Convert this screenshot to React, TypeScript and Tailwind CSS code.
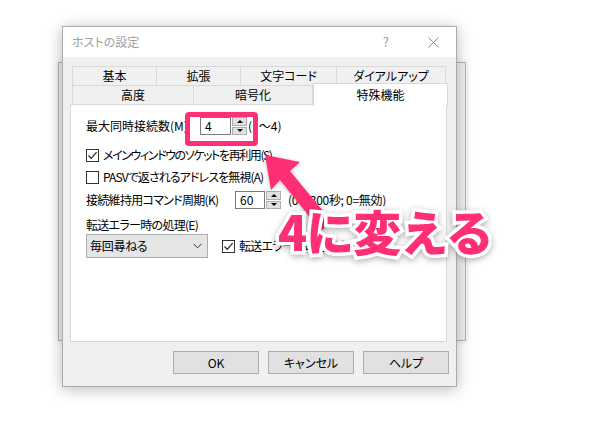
import React from "react";

const PINK = "#ff2f76";

function Spin(props: { value: string; width: number }) {
  const { value, width } = props;
  return <div className="flex items-stretch h-[18px]">
    <div className="h-full border border-[#7a7a7a] bg-white pl-[4px] text-[12px] leading-[16px] text-black" style={{ width }}>
      {value}
    </div>
    <div className="ml-[1px] w-[15px] flex flex-col gap-px">
      <div className="flex-1 bg-[#e1e1e1] border border-[#adadad] flex items-center justify-center">
        <div className="w-0 h-0 border-l-[3px] border-r-[3px] border-b-[3px] border-l-transparent border-r-transparent border-b-black" />
      </div>
      <div className="flex-1 bg-[#e1e1e1] border border-[#adadad] flex items-center justify-center">
        <div className="w-0 h-0 border-l-[3px] border-r-[3px] border-t-[3px] border-l-transparent border-r-transparent border-t-black" />
      </div>
    </div>
  </div>;
}

function Check(props: { checked?: boolean; label: string; tight?: string }) {
  const { checked = false, label, tight = "" } = props;
  return <div className="flex items-center h-[14px]">
    <div className="w-[13px] h-[13px] border border-[#333] bg-white flex items-center justify-center shrink-0">
      {checked && <svg width="11" height="11" viewBox="0 0 11 11">
        <path d="M1.5 5.5 L4.2 8.3 L9.6 2.2" fill="none" stroke="#222" strokeWidth="1.2" />
      </svg>}
    </div>
    <span className={"ml-[4px] text-[12px] leading-[14px] text-black whitespace-nowrap " + tight}>{label}</span>
  </div>;
}

function Tab(props: { label: string; width: number; active?: boolean }) {
  const { label, width, active = false } = props;
  return <div
    className={active
      ? "h-[23px] -mt-[2px] -mb-px bg-white border border-b-0 border-[#d9d9d9] flex items-center justify-center text-[12px] text-black relative z-10"
      : "h-[20px] bg-[#f0f0f0] border border-[#d9d9d9] -ml-px first:ml-0 flex items-center justify-center text-[12px] text-black"}
    style={{ width }}>
    {label}
  </div>;
}

function Button(props: { label: string }) {
  return <div className="w-[86px] h-[23px] bg-[#e1e1e1] border border-[#adadad] flex items-center justify-center text-[12px] text-black">
    {props.label}
  </div>;
}

export default function App() {
  return <div className="relative w-[607px] h-[431px] bg-white overflow-hidden [font-family:'Noto_Sans_CJK_JP',sans-serif] [font-feature-settings:'palt']">
    {/* window behind the dialog */}
    <div className="absolute left-[58px] top-[62px] w-[408px] h-[279px] bg-[#f0f0f0] border border-[#b4b4b4] shadow-[0_0_8px_rgba(0,0,0,0.12)]" />

    {/* dialog */}
    <div className="absolute left-[62px] top-[26px] w-[395px] h-[361px] bg-[#f0f0f0] border border-[#aaaaaa] shadow-[0_2px_14px_rgba(0,0,0,0.28)] flex flex-col">
      <div className="h-[30px] bg-white flex items-center pl-[9px] pr-[17px] shrink-0">
        <span className="text-[12px] text-[#a0a0a0]">ホストの設定</span>
        <div className="grow" />
        <span className="text-[13px] text-[#9a9a9a] mr-[39px]">?</span>
        <svg width="11" height="11" viewBox="0 0 11 11">
          <path d="M0.5 0.5 L10.5 10.5 M10.5 0.5 L0.5 10.5" stroke="#8a8a8a" strokeWidth="1" />
        </svg>
      </div>

      <div className="pl-[7px] pt-[9px] flex flex-col">
        <div className="pl-[2px] flex">
          <Tab label="基本" width={85} />
          <Tab label="拡張" width={85} />
          <Tab label="文字コード" width={97} />
          <Tab label="ダイアルアップ" width={110} />
        </div>
        <div className="pl-[2px] flex items-start -mt-px">
          <Tab label="高度" width={122} />
          <Tab label="暗号化" width={120} />
          <Tab label="特殊機能" width={135} active />
        </div>

        <div className="w-[377px] h-[238px] bg-white border border-[#d9d9d9] -mt-px pl-[15px] pt-[12px] flex flex-col text-[12px] text-black">
          <div className="flex items-center h-[18px]">
            <span className="w-[114px] whitespace-nowrap">最大同時接続数(M)</span>
            <Spin value="4" width={31} />
            <span className="ml-[1px] whitespace-nowrap">(1〜4)</span>
          </div>
          <div className="mt-[13px]"><Check checked label="メインウィンドウのソケットを再利用(S)" tight="tracking-[-1.4px]" /></div>
          <div className="mt-[8px]"><Check label="PASVで返されるアドレスを無視(A)" tight="tracking-[-0.9px]" /></div>
          <div className="mt-[7px] flex items-center h-[18px]">
            <span className="w-[149px] whitespace-nowrap tracking-[-0.7px]">接続維持用コマンド周期(K)</span>
            <Spin value="60" width={30} />
            <span className="ml-[7px] whitespace-nowrap tracking-[-0.3px]">(0〜300秒; 0=無効)</span>
          </div>
          <div className="mt-[8px] h-[16px] leading-[16px] tracking-[-0.7px]">転送エラー時の処理(E)</div>
          <div className="mt-[1px] flex items-center">
            <div className="w-[122px] h-[24px] bg-[#e5e5e5] border border-[#adadad] flex items-center pl-[3px] pr-[5px]">
              <span className="text-[12px] tracking-[-0.3px]">毎回尋ねる</span>
              <div className="grow" />
              <svg width="9" height="6" viewBox="0 0 9 6">
                <path d="M0.5 0.8 L4.5 4.8 L8.5 0.8" fill="none" stroke="#333" strokeWidth="1" />
              </svg>
            </div>
            <div className="ml-[14px]"><Check checked label="転送エラー時の通知を表示(O)" tight="tracking-[-0.7px]" /></div>
          </div>
        </div>

        <div className="mt-[9px] pr-[7px] flex justify-end gap-[9px]">
          <Button label="OK" />
          <Button label="キャンセル" />
          <Button label="ヘルプ" />
        </div>
      </div>
    </div>

    {/* annotation: highlight box */}
    <div className="absolute left-[185px] top-[112px] w-[73px] h-[34px] border-[5px] rounded-[4px]" style={{ borderColor: PINK }} />

    {/* annotation: arrow */}
    <svg className="absolute left-0 top-0 pointer-events-none drop-shadow-[0_1px_2px_rgba(0,0,0,0.25)]" width="607" height="431" viewBox="0 0 607 431">
      <polygon
        points="265,155 300,162 290,171 332,222 321,231 280,180 271,190"
        fill={PINK} />
    </svg>

    {/* annotation: text */}
    <div className="absolute left-[278px] top-[203px] text-[48px] leading-[54px] font-black whitespace-nowrap tracking-[-1px] [paint-order:stroke_fill] [-webkit-text-stroke:7px_white] drop-shadow-[0_2px_3px_rgba(0,0,0,0.3)] [font-feature-settings:normal]" style={{ color: PINK }}>
      4に変える
    </div>
  </div>;
}
